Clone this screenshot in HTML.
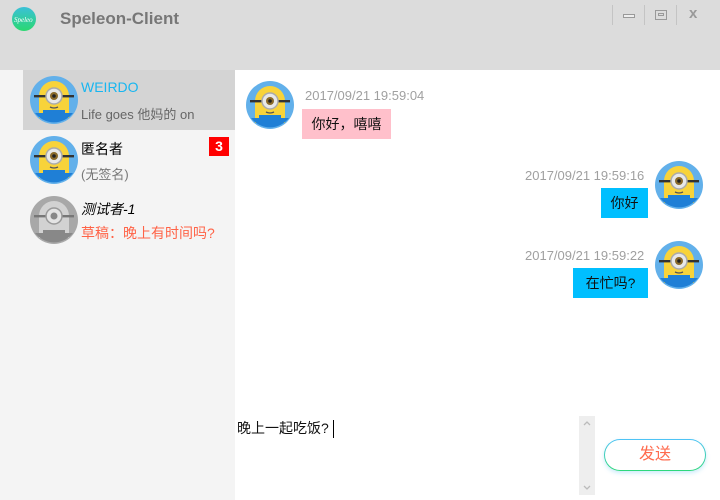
<!DOCTYPE html>
<html><head><meta charset="utf-8"><style>
*{margin:0;padding:0;box-sizing:border-box}
body{width:720px;height:500px;overflow:hidden;position:relative;background:#fff;font-family:"Liberation Sans","Noto Sans CJK SC",sans-serif;font-size:13px}
.hdr{position:absolute;left:0;top:0;width:720px;height:70px;background:#dcdcdc}
.title{position:absolute;left:60px;top:9px;font-size:17px;font-weight:bold;color:#777}
.left{position:absolute;left:0;top:70px;width:235px;height:430px;background:#f4f4f4}
.item{position:absolute;left:23px;width:212px;height:60px}
.av{position:absolute;width:48px;height:48px}
.nm{position:absolute;left:58px;top:9px;font-size:14px}
.sg{position:absolute;left:58px;top:34px;font-size:13px;color:#666}
.ts{position:absolute;font-size:13px;color:#a0a0a0}
.bb{position:absolute;height:30px;line-height:30px;font-size:14px;color:#111;text-align:center}
.sep{position:absolute;top:5px;width:1px;height:20px;background:#c4c4c4}
</style></head><body>
<svg width="0" height="0" style="position:absolute"><defs>
<g id="m">
<circle cx="24" cy="24" r="24" fill="#62b0ea"/>
<path d="M9 42 V20 a15 15 0 0 1 30 0 V42 z" fill="#f8d33a"/>
<rect x="4" y="19" width="40" height="2.4" fill="#333"/>
<circle cx="24" cy="20" r="8" fill="#e8e8e8" stroke="#aaa" stroke-width="1.5"/>
<circle cx="24" cy="20" r="4" fill="#8a6a2a"/><circle cx="24" cy="20" r="1.8" fill="#222"/>
<path d="M20 31 q4 2 8 0" stroke="#555" stroke-width="1.3" fill="none"/>
<path d="M5 37 H43 A24 24 0 0 1 5 37z" fill="#1f7fd6"/>
<rect x="13" y="34" width="22" height="6" fill="#1f7fd6"/>
</g>
<g id="g">
<circle cx="24" cy="24" r="24" fill="#a8a8a8"/>
<path d="M9 42 V20 a15 15 0 0 1 30 0 V42 z" fill="#d2d2d2"/>
<rect x="4" y="19" width="40" height="2.4" fill="#777"/>
<circle cx="24" cy="20" r="8" fill="#e4e4e4" stroke="#999" stroke-width="1.5"/>
<circle cx="24" cy="20" r="3.5" fill="#888"/>
<path d="M5 37 H43 A24 24 0 0 1 5 37z" fill="#888"/>
<rect x="13" y="34" width="22" height="6" fill="#888"/>
</g>
</defs></svg>
<div class="hdr">
<svg style="position:absolute;left:11px;top:6px" width="26" height="26"><defs><linearGradient id="lg" x1="0" y1="0" x2="0" y2="1"><stop offset="0" stop-color="#3bc0d8"/><stop offset="1" stop-color="#2ad870"/></linearGradient></defs><circle cx="13" cy="13" r="12" fill="url(#lg)"/><text x="3" y="16" font-size="7" fill="#fff" font-style="italic" font-family="Liberation Serif">Speleo</text></svg>
<div class="title">Speleon-Client</div>
<div class="sep" style="left:612px"></div><div class="sep" style="left:644px"></div><div class="sep" style="left:676px"></div>
<div style="position:absolute;left:623px;top:14px;width:12px;height:4px;border:1.5px solid #999;background:#eee"></div>
<div style="position:absolute;left:655px;top:10px;width:12px;height:10px;border:1.5px solid #999"><div style="margin:2px;height:3px;border:1px solid #999"></div></div>
<div style="position:absolute;left:689px;top:5px;font-size:15px;color:#999;font-weight:bold">x</div>
</div>
<div class="left">
<div class="item" style="top:0;background:#d4d4d4">
<svg class="av" style="left:7px;top:6px" viewBox="0 0 48 48"><use href="#m"/></svg>
<div class="nm" style="color:#18b6f0;top:9px">WEIRDO</div><div class="sg" style="color:#666">Life goes 他妈的 on</div></div>
<div class="item" style="top:60px">
<svg class="av" style="left:7px;top:6px" viewBox="0 0 48 48"><use href="#m"/></svg>
<div class="nm" style="color:#000">匿名者</div><div class="sg" style="color:#777">(无签名)</div>
<div style="position:absolute;left:186px;top:7px;width:20px;height:19px;background:#f00;color:#fff;font-weight:bold;font-size:14px;text-align:center;line-height:19px">3</div></div>
<div class="item" style="top:120px">
<svg class="av" style="left:7px;top:6px" viewBox="0 0 48 48"><use href="#g"/></svg>
<div class="nm" style="color:#000;font-style:italic">测试者-1</div><div class="sg" style="color:#ff6347;font-size:14px;top:33px">草稿：晚上有时间吗?</div></div>
</div>
<svg class="av" style="left:246px;top:81px" viewBox="0 0 48 48"><use href="#m"/></svg>
<div class="ts" style="left:305px;top:88px">2017/09/21 19:59:04</div>
<div class="bb" style="left:302px;top:109px;width:89px;background:#ffc0cb">你好，嘻嘻</div>
<svg class="av" style="left:655px;top:161px" viewBox="0 0 48 48"><use href="#m"/></svg>
<div class="ts" style="left:525px;top:168px">2017/09/21 19:59:16</div>
<div class="bb" style="left:601px;top:188px;width:47px;background:#00bfff">你好</div>
<svg class="av" style="left:655px;top:241px" viewBox="0 0 48 48"><use href="#m"/></svg>
<div class="ts" style="left:525px;top:248px">2017/09/21 19:59:22</div>
<div class="bb" style="left:573px;top:268px;width:75px;background:#00bfff">在忙吗?</div>
<div style="position:absolute;left:237px;top:418px;font-size:14px;color:#111">晚上一起吃饭? <span style="display:inline-block;width:1px;height:18px;background:#000;vertical-align:middle"></span></div>
<div style="position:absolute;left:579px;top:416px;width:16px;height:79px;background:#eee">
<svg style="position:absolute;left:4px;top:5px" width="8" height="5"><path d="M1 4 L4 1 L7 4" stroke="#bbb" fill="none" stroke-width="1.3"/></svg>
<svg style="position:absolute;left:4px;top:69px" width="8" height="5"><path d="M1 1 L4 4 L7 1" stroke="#bbb" fill="none" stroke-width="1.3"/></svg></div>
<div style="position:absolute;left:604px;top:439px;width:102px;height:32px;border-radius:16px;padding:1px;background:linear-gradient(#4fc3f7,#2ed87a);box-shadow:0 2px 4px rgba(80,190,240,.3)">
<div style="width:100%;height:100%;border-radius:15px;background:#fff;color:#ff6a4d;font-size:16px;text-align:center;line-height:30px">发送</div></div>
</body></html>
